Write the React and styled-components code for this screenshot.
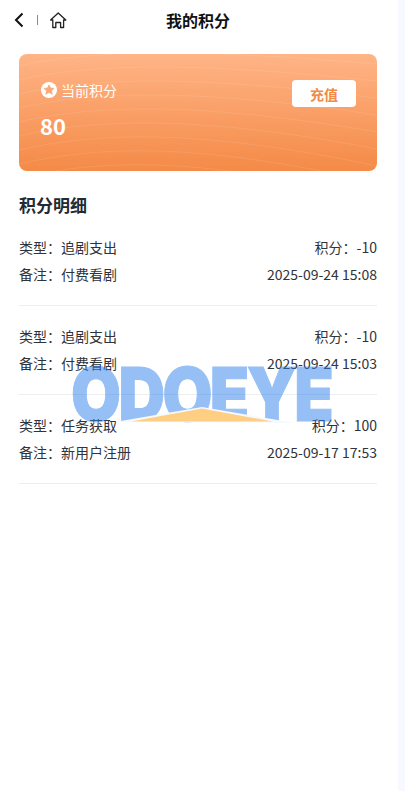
import React from "react";
import styled, {createGlobalStyle} from "styled-components";

const GlobalStyle = createGlobalStyle`
	html, body {
		margin: 0;
		padding: 0;
		background: #f8f9ff;
	}
	body {
		font-family: "Noto Sans CJK SC", "Noto Sans", sans-serif;
	}
`;

const Page = styled.div`
	position: relative;
	width: 398px;
	height: 791px;
	background: #ffffff;
	overflow: hidden;
`;

const Header = styled.header`
	display: flex;
	align-items: center;
	justify-content: center;
	position: relative;
	height: 41px;
	padding-right: 2px;
`;

const HeaderTools = styled.div`
	position: absolute;
	left: 13px;
	top: 10px;
	display: flex;
	align-items: center;
	height: 20px;
`;

const Divider = styled.span`
	width: 1px;
	height: 10px;
	margin: 0 12px 0 12px;
	background: #8b8b8b;
`;

const Title = styled.h1`
	margin: 0;
	font-size: 16px;
	font-weight: 700;
	line-height: 41px;
	color: #111111;
`;

const Content = styled.main`
	padding: 13px 21px 0 19px;
`;

const Card = styled.section`
	position: relative;
	height: 117px;
	box-sizing: border-box;
	padding: 24px 21px 0 22px;
	border-radius: 8px;
	background: linear-gradient(180deg, #ffb486 0%, #f48a47 100%);
	overflow: hidden;
	display: flex;
	justify-content: space-between;
	align-items: flex-start;
`;

const Waves = styled.svg`
	position: absolute;
	inset: 0;
	width: 100%;
	height: 100%;
`;

const CardInfo = styled.div`
	position: relative;
`;

const CardLabel = styled.div`
	display: flex;
	align-items: center;
	gap: 4px;
	height: 24px;
	font-size: 14px;
	color: #ffffff;
`;

const Points = styled.div`
	margin-top: 8px;
	margin-left: -1px;
	font-size: 22px;
	font-weight: 700;
	line-height: 30px;
	color: #ffffff;
`;

const RechargeButton = styled.button`
	position: relative;
	width: 64px;
	height: 27px;
	margin-top: 2px;
	padding: 0;
	border: 0;
	border-radius: 4px;
	background: #ffffff;
	font-family: inherit;
	font-size: 14px;
	font-weight: 700;
	color: #f08a45;
`;

const SectionTitle = styled.h2`
	margin: 21px 0 0;
	font-size: 17px;
	font-weight: 700;
	line-height: 26px;
	color: #222a33;
`;

const RecordList = styled.div`
	margin-top: -1px;
`;

const Record = styled.div`
	height: 89px;
	box-sizing: border-box;
	padding-top: 17px;
	border-bottom: 1px solid #eceef0;
`;

const RecordRow = styled.div`
	display: flex;
	justify-content: space-between;
	height: 27px;
	line-height: 27px;
	font-size: 14px;
	color: #30343a;
`;

const Watermark = styled.div`
	position: absolute;
	left: 71px;
	top: 366px;
	width: 262px;
	height: 60px;
	pointer-events: none;
`;

const WatermarkText = styled.div`
	font-family: "Inter", "Liberation Sans", sans-serif;
	font-size: 74px;
	font-weight: 900;
	line-height: 56px;
	letter-spacing: -3px;
	color: #2f80ed;
	opacity: 0.5;
	-webkit-text-stroke: 1px #2f80ed;
	transform: scaleX(0.872);
	transform-origin: left top;
	white-space: nowrap;
`;

const WatermarkRoof = styled.svg`
	position: absolute;
	left: 0;
	top: 0;
	width: 262px;
	height: 60px;
`;

const records = [
	{type: "追剧支出", note: "付费看剧", score: "-10", time: "2025-09-24 15:08"},
	{type: "追剧支出", note: "付费看剧", score: "-10", time: "2025-09-24 15:03"},
	{type: "任务获取", note: "新用户注册", score: "100", time: "2025-09-17 17:53"},
];

const waveLines = [0, 1, 2, 3, 4, 5, 6, 7, 8];

export default function App() {
	return (
		<Page>
			<GlobalStyle />
			<Header>
				<HeaderTools>
					<svg width="12" height="16" viewBox="0 0 12 16" fill="none" stroke="#111" strokeWidth="2">
						<path d="M9.5 1.5 3 8l6.500 6.500" />
					</svg>
					<Divider />
					<svg width="17" height="17" viewBox="0 0 17 17" fill="none" stroke="#222" strokeWidth="1.300" strokeLinejoin="round">
						<path d="M.6 8 8.200 1 15.800 8h-2.200v7.500h-3V10.500H5.800v5h-3V8z" />
					</svg>
				</HeaderTools>
				<Title>我的积分</Title>
			</Header>
			<Content>
				<Card>
					<Waves viewBox="0 0 358 117" preserveAspectRatio="none" fill="none" stroke="#ffffff" strokeOpacity="0.1">
						{waveLines.map((i) => (
							<path key={i} d={`M0 ${12 + i * 14} C70 ${-4 + i * 14} 170 ${-6 + i * 13} 358 ${i * 17 + 10}`} />
						))}
					</Waves>
					<CardInfo>
						<CardLabel>
							<svg width="16" height="16" viewBox="0 0 16 16">
								<circle cx="8" cy="8" r="8" fill="#ffffff" />
								<path d="M8 2.800 9.600 6l3.500.4-2.600 2.400.8 3.500L8 10.500l-3.300 1.800.8-3.500-2.600-2.400L6.400 6z" fill="#f9a873" stroke="#f9a873" strokeWidth="0.6" strokeLinejoin="round" />
							</svg>
							当前积分
						</CardLabel>
						<Points>80</Points>
					</CardInfo>
					<RechargeButton>充值</RechargeButton>
				</Card>
				<SectionTitle>积分明细</SectionTitle>
				<RecordList>
					{records.map((r, i) => (
						<Record key={i}>
							<RecordRow>
								<span>类型：{r.type}</span>
								<span>积分：{r.score}</span>
							</RecordRow>
							<RecordRow>
								<span>备注：{r.note}</span>
								<span>{r.time}</span>
							</RecordRow>
						</Record>
					))}
				</RecordList>
			</Content>
			<Watermark>
				<WatermarkText>ODOEYE</WatermarkText>
				<WatermarkRoof viewBox="0 0 262 60">
					<path d="M44 56 131 41 224 57z" fill="#f6f9ff" />
					<path d="M60 55.500 131 42.500 202 55.500z" fill="#fecf82" />
				</WatermarkRoof>
			</Watermark>
		</Page>
	);
}
